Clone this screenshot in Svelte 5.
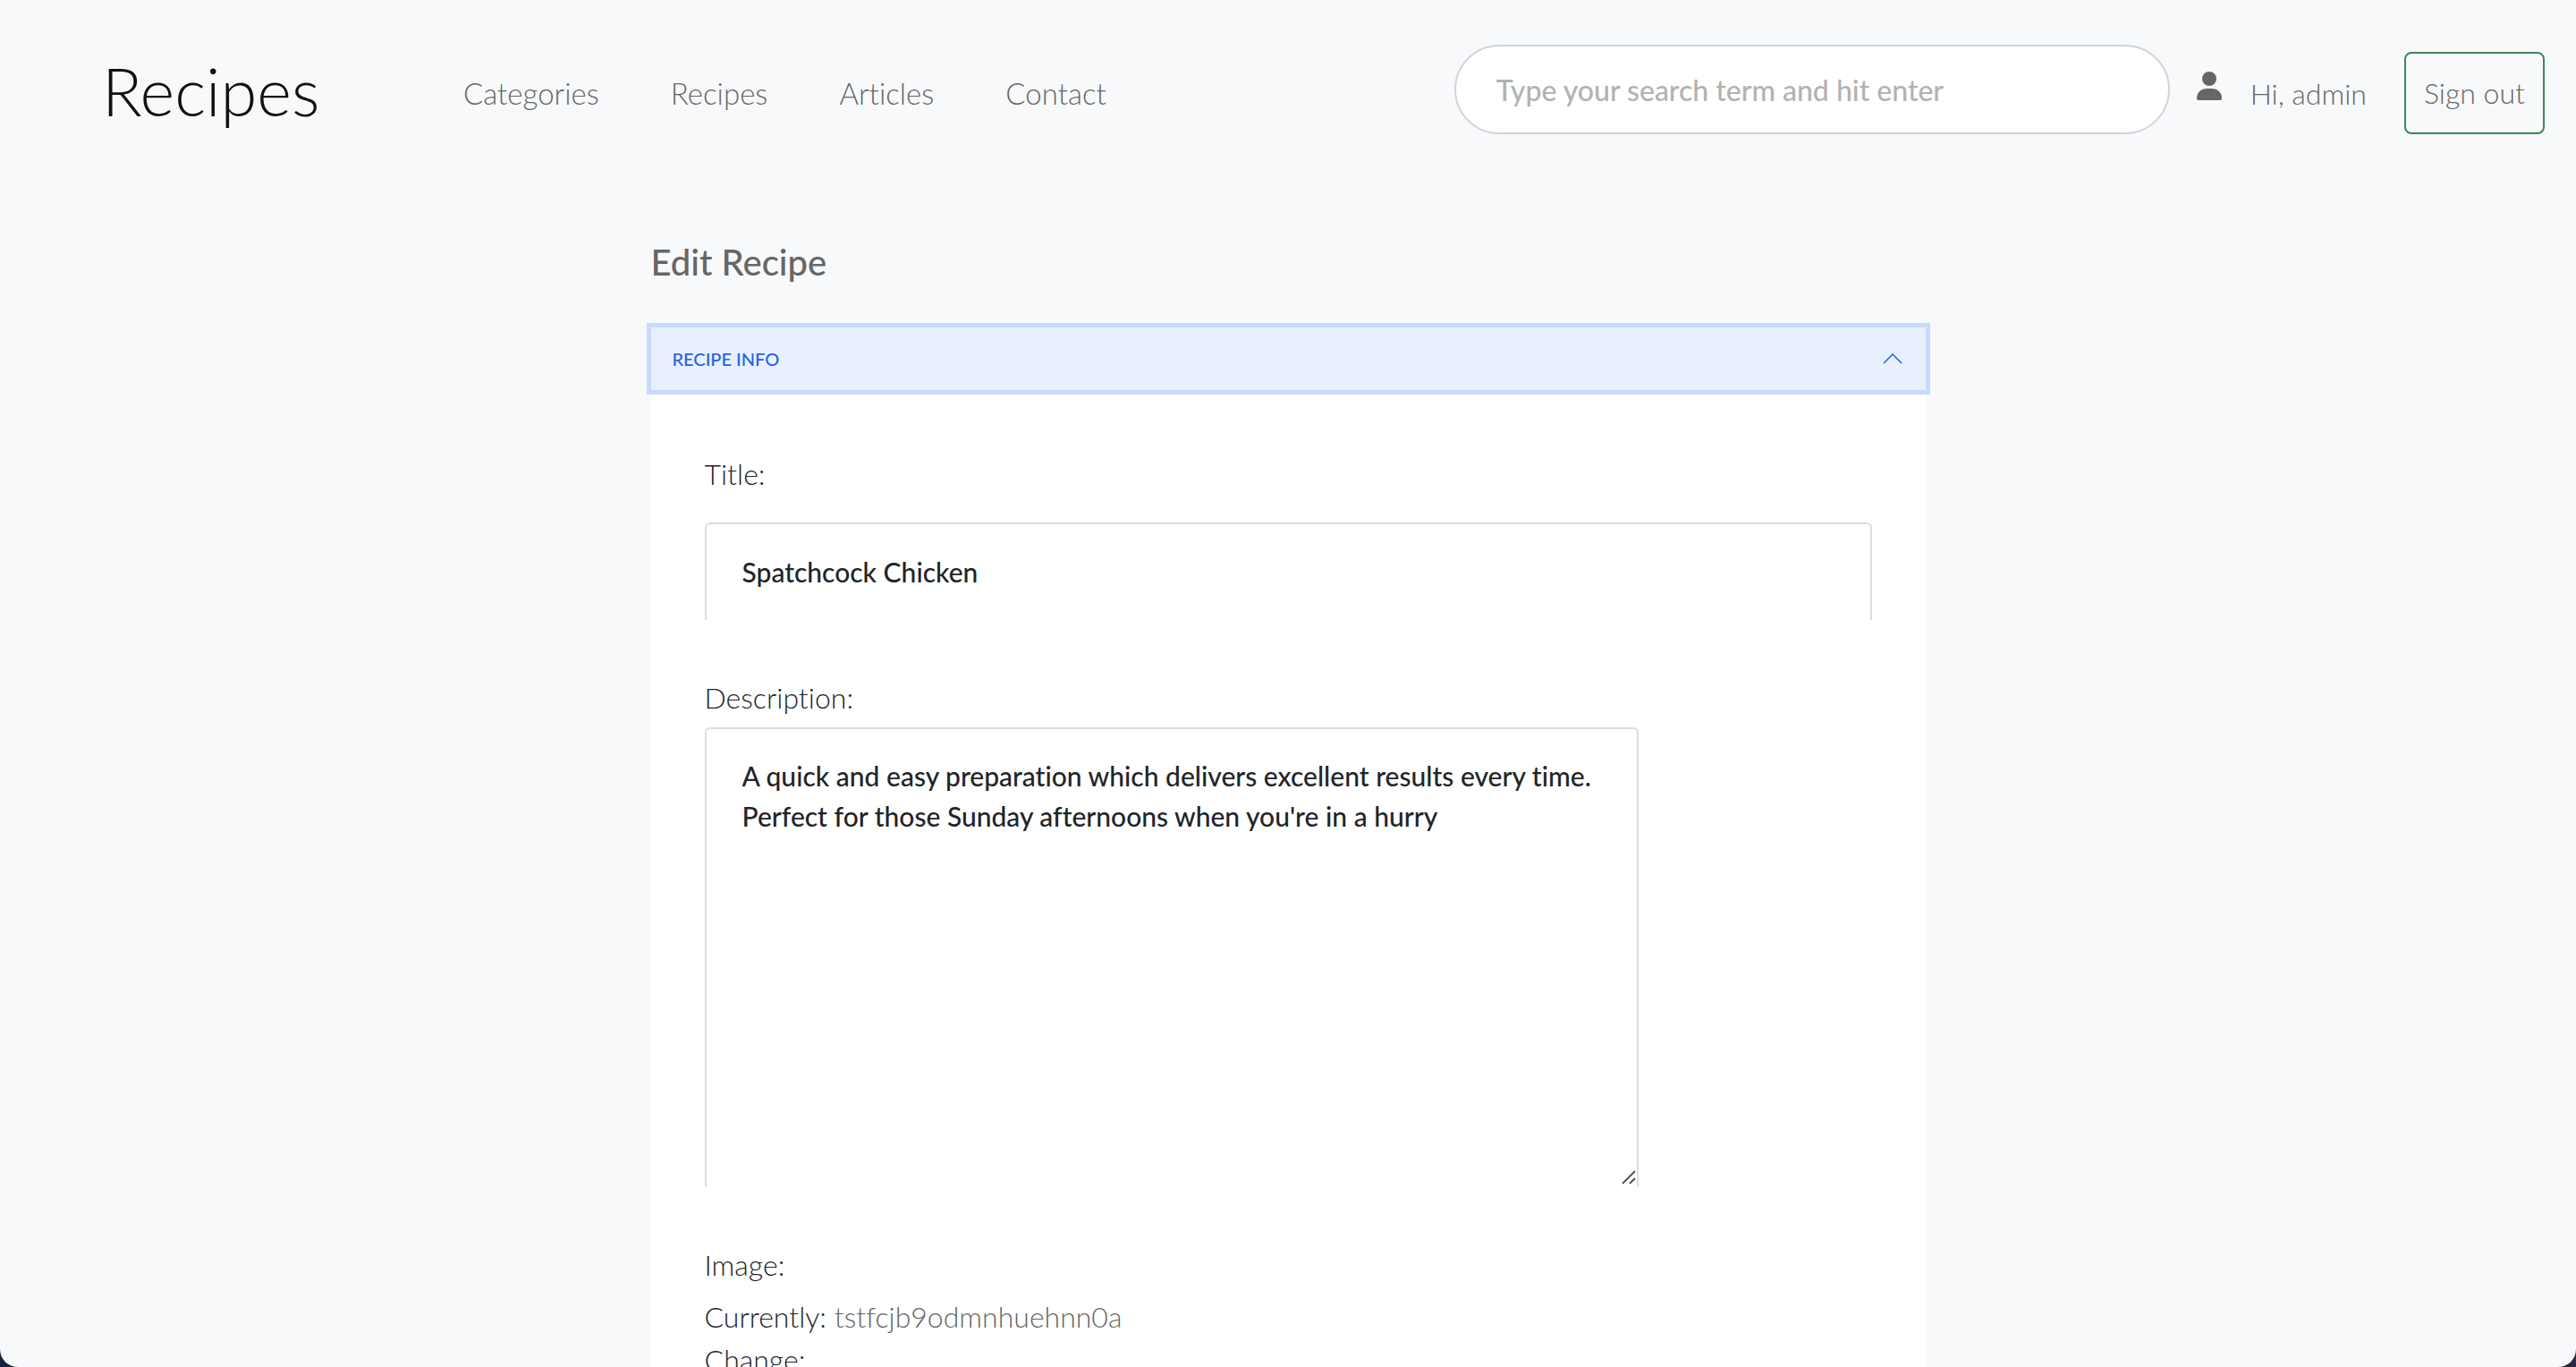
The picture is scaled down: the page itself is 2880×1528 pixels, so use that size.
<script lang="ts">
  const links = ['Categories', 'Recipes', 'Articles', 'Contact'];
  let open = $state(true);
  let search = $state('');
  let title = $state('Spatchcock Chicken');
  let description = $state(
    "A quick and easy preparation which delivers excellent results every time.\nPerfect for those Sunday afternoons when you're in a hurry"
  );
</script>

<div class="page">
  <header>
    <a class="brand" href="#home">Recipes</a>
    <nav aria-label="Main">
      {#each links as link}
        <a href={'#' + link.toLowerCase()}>{link}</a>
      {/each}
    </nav>
    <div class="account">
      <input
        class="search"
        type="search"
        aria-label="Search"
        placeholder="Type your search term and hit enter"
        bind:value={search}
      />
      <svg class="user" viewBox="0 0 28 32" aria-hidden="true">
        <circle cx="14" cy="8" r="8" />
        <path d="M0 30C0 23 5 19 11 19h6c6 0 11 4 11 11 0 1.200-.8 2-2 2H2c-1.200 0-2-.8-2-2z" />
      </svg>
      <span class="greeting">Hi, admin</span>
      <button class="signout" type="button">Sign out</button>
    </div>
  </header>

  <main>
    <h1>Edit Recipe</h1>
    <section>
      <button class="toggle" type="button" aria-expanded={open} onclick={() => (open = !open)}>
        <span>RECIPE INFO</span>
        <svg viewBox="0 0 22 12" aria-hidden="true"><path d="M1 11 11 1l10 10" /></svg>
      </button>
      {#if open}
        <form>
          <label for="title">Title:</label>
          <input id="title" class="field" type="text" bind:value={title} />
          <label for="description">Description:</label>
          <div class="area">
            <textarea id="description" class="field" bind:value={description}></textarea>
            <svg viewBox="0 0 16 16" aria-hidden="true"><path d="M1 15 15 1M9 15l6-6" /></svg>
          </div>
          <span>Image:</span>
          <p>Currently: <a href="#image">tstfcjb9odmnhuehnn0a</a></p>
          <label for="image">Change:</label>
          <input id="image" class="file" type="file" />
        </form>
      {/if}
    </section>
  </main>
</div>

<style>
  :global(body) {
    background: linear-gradient(90deg, #10263f, #2c2847);
  }

  .page,
  .page * {
    box-sizing: border-box;
  }

  .page {
    height: 100vh;
    overflow: hidden;
    border-radius: 0 0 20px 20px;
    background: #f8f9fb;
    color: #212529;
    font-family: Lato, 'Liberation Sans', sans-serif;
    font-size: 32px;
    font-weight: 300;
    font-variant-ligatures: none;
    line-height: 48px;
  }

  a {
    color: #666;
    text-decoration: none;
  }

  button,
  input,
  textarea {
    font: inherit;
    font-variant-ligatures: none;
  }

  header {
    display: flex;
    align-items: center;
    padding: 48px 35px 0 114px;
  }

  .brand {
    width: 404px;
    color: #111;
    font-size: 74px;
    font-weight: 300;
    line-height: 108px;
  }

  nav {
    display: flex;
    gap: 80px;
    padding-top: 4px;
    font-size: 33px;
  }

  .account {
    display: flex;
    align-items: flex-start;
    margin: 0 0 4px auto;
  }

  .search {
    width: 800px;
    height: 100px;
    padding: 0 45px;
    border: 2px solid #ced4da;
    border-radius: 50px;
    background: #fff;
    font-weight: 500;
    appearance: none;
  }

  .search::placeholder {
    color: #b2b2b2;
    opacity: 1;
  }

  .user {
    width: 28px;
    height: 32px;
    margin: 30px 32px 0 30px;
    fill: #666;
  }

  .greeting {
    margin: 31px 42px 0 0;
    color: #666;
  }

  .signout {
    height: 92px;
    margin-top: 8px;
    padding: 0 20px;
    border: 2px solid #3d8857;
    border-radius: 8px;
    background: transparent;
    color: #666;
  }

  main {
    max-width: 1425px;
    margin: 0 auto;
    padding-top: 106px;
  }

  h1 {
    margin: 0 0 42px;
    color: #666;
    font-size: 40px;
    font-weight: 500;
    line-height: 62px;
  }

  section {
    background: #fff;
  }

  .toggle {
    display: flex;
    align-items: center;
    justify-content: space-between;
    width: 100%;
    height: 70px;
    padding: 0 26px 0 24px;
    border: 0;
    background: #e8f0fe;
    box-shadow: 0 0 0 5px #c8d9fa;
    color: #2463e0;
    font-size: 20px;
    font-weight: 500;
  }

  .toggle svg {
    width: 22px;
    height: 12px;
    fill: none;
    stroke: #2463e0;
    stroke-width: 1.5;
  }

  form {
    display: flex;
    flex-direction: column;
    padding: 70px 60px 60px;
  }

  .field {
    display: block;
    width: 100%;
    border: 2px solid #ddd;
    border-bottom: 0;
    border-radius: 6px 6px 0 0;
    background: #fff;
    color: #212529;
    font-size: 30px;
    font-weight: 500;
    line-height: 45px;
  }

  input.field {
    height: 109px;
    margin: 30px 0 63px;
    padding: 0 40px 2px;
  }

  .area {
    position: relative;
    width: 80%;
    margin: 9px 0 63px;
  }

  textarea.field {
    height: 514px;
    padding: 30px 40px;
    overflow: hidden;
    resize: none;
  }

  .area svg {
    position: absolute;
    right: 3px;
    bottom: 3px;
    width: 16px;
    height: 16px;
    fill: none;
    stroke: #555;
    stroke-width: 2;
  }

  p {
    margin: 10px 0 0;
  }

  .file {
    margin-top: 16px;
  }
</style>
